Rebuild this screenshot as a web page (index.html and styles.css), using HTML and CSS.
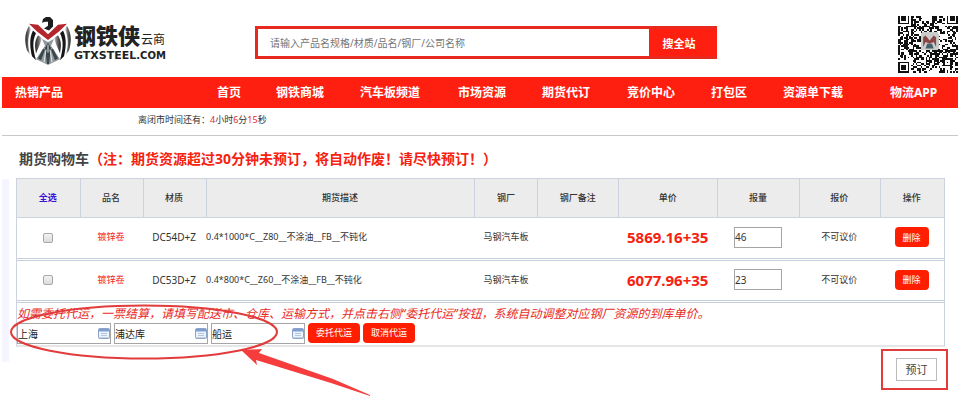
FILE: index.html
```html
<!DOCTYPE html>
<html lang="zh-CN">
<head>
<meta charset="utf-8">
<title>期货购物车</title>
<link rel="stylesheet" href="styles.css">
</head>
<body>
<header class="top">
  <a class="logo" href="#">
    <svg class="eagle" viewBox="0 0 46 50" preserveAspectRatio="none" aria-hidden="true">
      <defs>
        <linearGradient id="wing" x1="0" x2="1" y1="0" y2="0"><stop offset="0" stop-color="#222"/><stop offset=".6" stop-color="#777"/><stop offset="1" stop-color="#ddd"/></linearGradient>
        <linearGradient id="wingr" x1="1" x2="0" y1="0" y2="0"><stop offset="0" stop-color="#222"/><stop offset=".6" stop-color="#777"/><stop offset="1" stop-color="#ddd"/></linearGradient>
      </defs>
      <path d="M18 2l3-2h4l3 3v7l-4 4-5-2 4-3V5h-3l-3 1z" fill="#1d1d20"/>
      <path d="M4 9C0 16-1 24 2 35l3 4C2 28 3 20 6 13z" fill="url(#wing)"/>
      <path d="M8 14c-4 8-3 18-1 27l4 4C8 34 7 25 11 17z" fill="#17171a"/>
      <path d="M13 19c-4 7-3 12-2 19l4-10 2-6z" fill="url(#wing)"/>
      <path d="M42 9c4 7 5 15 2 26l-3 4c3-11 2-19-1-26z" fill="url(#wingr)"/>
      <path d="M38 14c4 8 3 18 1 27l-4 4c3-11 4-20 0-28z" fill="#17171a"/>
      <path d="M33 19c4 7 3 12 2 19l-4-10-2-6z" fill="url(#wingr)"/>
      <path d="M4 7l9 1 10 10L33 8l9-1-8 8-11 9-11-9z" fill="#b5262c"/>
      <path d="M17 23l6 3 6-3-3 7 9 14-8 4-4 2-4-2-8-4 9-14z" fill="#91999c"/>
      <path d="M23 27l3 5-2 17h-2l-2-17zM18 33l-5 10 3 2 4-11zM28 33l5 10-3 2-4-11z" fill="#39474c"/>
      <path d="M21 34l-2 13M25 34l2 13M23 29v8" stroke="#e8e8e8" fill="none"/>
    </svg>
    <span class="wordmark">
      <span class="brand">钢铁侠<small>云商</small></span>
      <span class="domain">GTXSTEEL<small>.COM</small></span>
    </span>
  </a>
  <form class="search">
    <input type="text" aria-label="搜索" placeholder="请输入产品名规格/材质/品名/钢厂/公司名称">
    <button type="button">搜全站</button>
  </form>
  <svg class="qr" viewBox="0 2 37 35" preserveAspectRatio="none" shape-rendering="crispEdges" aria-hidden="true">
    <path id="modules" fill="#111"/>
    <rect x="14" y="12" width="11" height="11" rx="1" fill="#c9cccb"/>
    <path d="M15.500 15l1.500-1 2.500 3 2.500-3 1.500 1v6l-1.500-3-2.500 1-2.500-1-1.500 3z" fill="#8a4746" shape-rendering="auto"/>
    <path d="M18 19h3l1 3h-5z" fill="#46606a" shape-rendering="auto"/>
  </svg>
</header>
<nav class="menu">
  <a href="#">热销产品</a><a href="#">首页</a><a href="#">钢铁商城</a><a href="#">汽车板频道</a><a href="#">市场资源</a><a href="#">期货代订</a><a href="#">竞价中心</a><a href="#">打包区</a><a href="#">资源单下载</a><a href="#">物流APP</a>
</nav>
<p class="countdown">离闭市时间还有：<b>4</b>小时<b>6</b>分<b>15</b>秒</p>
<main>
  <h1>期货购物车<em>（注：期货资源超过30分钟未预订，将自动作废！请尽快预订！）</em></h1>
  <div class="cart">
    <table>
      <colgroup><col class="c-s"><col class="c-s"><col class="c-s"><col class="c-desc"><col class="c-s"><col class="c-note"><col class="c-price"><col class="c-qty"><col class="c-offer"><col class="c-act"></colgroup>
      <thead>
        <tr><th><a class="all" href="#">全选</a></th><th>品名</th><th>材质</th><th>期货描述</th><th>钢厂</th><th>钢厂备注</th><th>单价</th><th>报量</th><th>报价</th><th>操作</th></tr>
      </thead>
      <tbody>
        <tr>
          <td><input type="checkbox" aria-label="选择 DC54D+Z"></td>
          <td><a class="product" href="#">镀锌卷</a></td>
          <td class="grade">DC54D+Z</td>
          <td class="desc">0.4*1000*C__Z80__不涂油__FB__不钝化</td>
          <td>马钢汽车板</td><td></td>
          <td class="price">5869.16+35</td>
          <td><input class="qty" type="text" value="46" aria-label="报量"></td>
          <td>不可议价</td>
          <td><button class="btn" type="button">删除</button></td>
        </tr>
        <tr>
          <td><input type="checkbox" aria-label="选择 DC53D+Z"></td>
          <td><a class="product" href="#">镀锌卷</a></td>
          <td class="grade">DC53D+Z</td>
          <td class="desc">0.4*800*C__Z60__不涂油__FB__不钝化</td>
          <td>马钢汽车板</td><td></td>
          <td class="price">6077.96+35</td>
          <td><input class="qty" type="text" value="23" aria-label="报量"></td>
          <td>不可议价</td>
          <td><button class="btn" type="button">删除</button></td>
        </tr>
      </tbody>
    </table>
    <div class="shipping">
      <p>如需委托代运，一票结算，请填写配送市、仓库、运输方式，并点击右侧“委托代运”按钮，系统自动调整对应钢厂资源的到库单价。</p>
      <div class="fields">
        <span class="picker"><input type="text" value="上海" aria-label="配送市"><svg viewBox="0 0 12 11" aria-hidden="true"><use href="#panel"/></svg></span>
        <span class="picker"><input type="text" value="浦达库" aria-label="仓库"><svg viewBox="0 0 12 11" aria-hidden="true"><use href="#panel"/></svg></span>
        <span class="picker"><input type="text" value="船运" aria-label="运输方式"><svg viewBox="0 0 12 11" aria-hidden="true"><use href="#panel"/></svg></span>
        <button class="btn wide" type="button">委托代运</button>
        <button class="btn wide" type="button">取消代运</button>
      </div>
    </div>
    <svg class="mark" viewBox="0 0 364 96" aria-hidden="true">
      <ellipse cx="136" cy="30" rx="133" ry="26.500" fill="none" stroke="#e23b3b" stroke-width="2"/>
      <path d="M233 48l21-1-3 4 74 26 37 16v1l-39-13-75-23 1 5z" fill="#f53d3d"/>
    </svg>
  </div>
  <div class="submit"><button type="button">预订</button></div>
</main>
<svg class="defs" aria-hidden="true">
  <symbol id="panel" viewBox="0 0 12 11">
    <rect x=".5" y=".5" width="11" height="10" rx="1" fill="#edf3fb" stroke="#8ba3cb"/>
    <path d="M1 1h10v2.500H1z" fill="#7f9dd0"/>
    <path d="M3 5.500h6M3 7.500h6" stroke="#b5c6e2"/>
    <path d="M1 10h10" stroke="#9bacc9"/>
  </symbol>
</svg>
<script src="qr.js"></script>
</body>
</html>
```
FILE: styles.css
```css
* { box-sizing: border-box; }
body {
  margin: 0;
  background: #fff;
  color: #333;
  font: 9px/14px "Noto Sans", "Noto Sans CJK SC", sans-serif;
}
a { color: inherit; text-decoration: none; }
button, input { font-family: inherit; margin: 0; }
button { cursor: pointer; }
.defs { display: none; }

.top {
  display: grid;
  grid-template-columns: 230fr 462fr 181fr 60px;
  align-items: center;
  padding: 10px 9px 0 25px;
  height: 77px;
}
.logo { display: flex; gap: 3px; align-items: center; margin-bottom: 6px; }
.eagle { width: 46px; height: 48px; flex: none; }
.wordmark { display: flex; flex-direction: column; padding-top: 4px; color: #222; white-space: nowrap; }
.brand { font: 900 22px/22px "Noto Sans CJK SC", sans-serif; }
.brand small { font-size: 12px; font-weight: 400; margin-left: 1px; }
.domain { font: bold 11px/12px "DejaVu Sans", sans-serif; }
.domain small { font-size: 10px; }

.search { display: flex; height: 33px; margin-bottom: 2px; background: #ff1f10; border: 3px solid #e8291d; border-right: 0; }
.search input { flex: 1; min-width: 0; border: 0; padding: 0 12px; font-size: 10px; background: #fff; }
.search input::placeholder { color: #757575; }
.search button { flex: 0 0 68px; padding: 0 8px 0 0; border: 0; background: #ff1f10; color: #fff; font-size: 11px; font-weight: bold; }
.qr { grid-column: 4; width: 60px; height: 57px; margin-top: 2px; }

.menu {
  display: grid;
  grid-template-columns: 202fr 59fr 84fr 98fr 84fr 85fr 84fr 72fr 107fr 68fr;
  margin: 0 9px 0 2px;
  padding-left: 13px;
  background: #ff1f10;
  color: #fff;
  font-size: 12px;
  font-weight: bold;
  line-height: 31px;
  white-space: nowrap;
}
.countdown { margin: 0 9px 0 2px; padding: 5px 0 8px 136px; border-bottom: 1px solid #c8c8c8; }
.countdown b { font-weight: 400; color: #e8291d; }

main { padding: 0 22px 20px 16px; }
h1 { margin: 0; padding: 3px 0 0 3px; font-size: 14px; line-height: 39px; color: #444; }
h1 em { font-style: normal; color: #f6210f; }

.cart { position: relative; border: 1px solid #ccd3de; border-bottom: 2px solid #e6e6e6; }
.cart::before { content: ""; position: absolute; left: -15px; top: 0; width: 7px; height: 183px; background: #f5f5ff; }
table { width: 100%; border-collapse: collapse; table-layout: fixed; }
.c-s { width: 6.8%; }
.c-desc { width: 29%; }
.c-note { width: 8.7%; }
.c-price { width: 10.7%; }
.c-qty { width: 8.8%; }
.c-offer { width: 8.7%; }
.c-act { width: 6.9%; }
th, td { padding: 0 1px 0 0; text-align: center; vertical-align: middle; white-space: nowrap; }
th { height: 38px; background: #ececec; font-weight: 500; border-bottom: 1px solid #ccd3de; }
th + th { border-left: 1px solid #ccd3de; }
td { height: 42px; padding-bottom: 1px; border-bottom: 3px double #c5d0dd; }
.all { color: #3a12d8; font-weight: bold; }
.product { color: #f6210f; }
.grade { font-size: 10px; }
.desc { text-align: left; }
.price { color: #f6210f; font-size: 15px; font-weight: bold; }
input[type="checkbox"] {
  appearance: none;
  display: inline-block;
  width: 10px;
  height: 10px;
  vertical-align: middle;
  border: 1px solid #a8a8a8;
  border-radius: 2px;
  background: linear-gradient(#f2f2f2, #dcdcdc);
}
.qty { width: 48px; height: 21px; padding: 0; border: 1px solid #a5a5a5; font-size: 10px; color: #333; }
.btn { width: 34px; height: 20px; padding: 0; border: 0; border-radius: 4px; background: #ff1e00; color: #fff; font-size: 9px; }
.wide { width: 52px; }

.shipping { padding: 2px 0 1px; }
.shipping p { margin: 0; font-size: 12px; line-height: 18px; font-style: italic; color: #e8291d; white-space: nowrap; }
.fields { display: flex; gap: 3px; }
.picker { display: flex; align-items: center; width: 94px; height: 21px; border: 1px solid #a5a5a5; }
.picker input { flex: 1; min-width: 0; padding: 0; border: 0; font-size: 10px; color: #222; background: none; }
.picker svg { width: 12px; height: 11px; flex: none; }
.mark { position: absolute; left: -9px; top: 123px; width: 364px; height: 96px; pointer-events: none; }

.submit { display: flex; width: 67px; margin: 2px -3px 0 auto; padding: 7px 9px 7px 13px; border: 2px solid #e23b3b; }
.submit button { flex: 1; height: 23px; padding: 0; border: 1px solid #bbb; background: #fff; color: #444; font-size: 11px; }
```
FILE: qr.js
```js
// Fills the code symbol: 37 x 37 modules with finder and alignment squares.
const size = 37;
let seed = 20177;
const next = () => (seed = (seed * 1103515245 + 12345) % 2147483648) / 2147483648;
const ring = (x, y, cx, cy) => Math.max(Math.abs(x - cx), Math.abs(y - cy));
const finders = [[3, 3], [33, 3], [3, 33]];
let d = "";
for (let y = 0; y < size; y++) {
  for (let x = 0; x < size; x++) {
    let on = next() < 0.5;
    for (const [cx, cy] of finders) {
      const r = ring(x, y, cx, cy);
      if (r <= 4) on = r !== 2 && r !== 4;
    }
    const a = ring(x, y, 30, 30);
    if (a <= 2) on = a !== 1;
    if (on) d += `M${x} ${y}h1v1h-1z`;
  }
}
document.getElementById("modules").setAttribute("d", d);
```
